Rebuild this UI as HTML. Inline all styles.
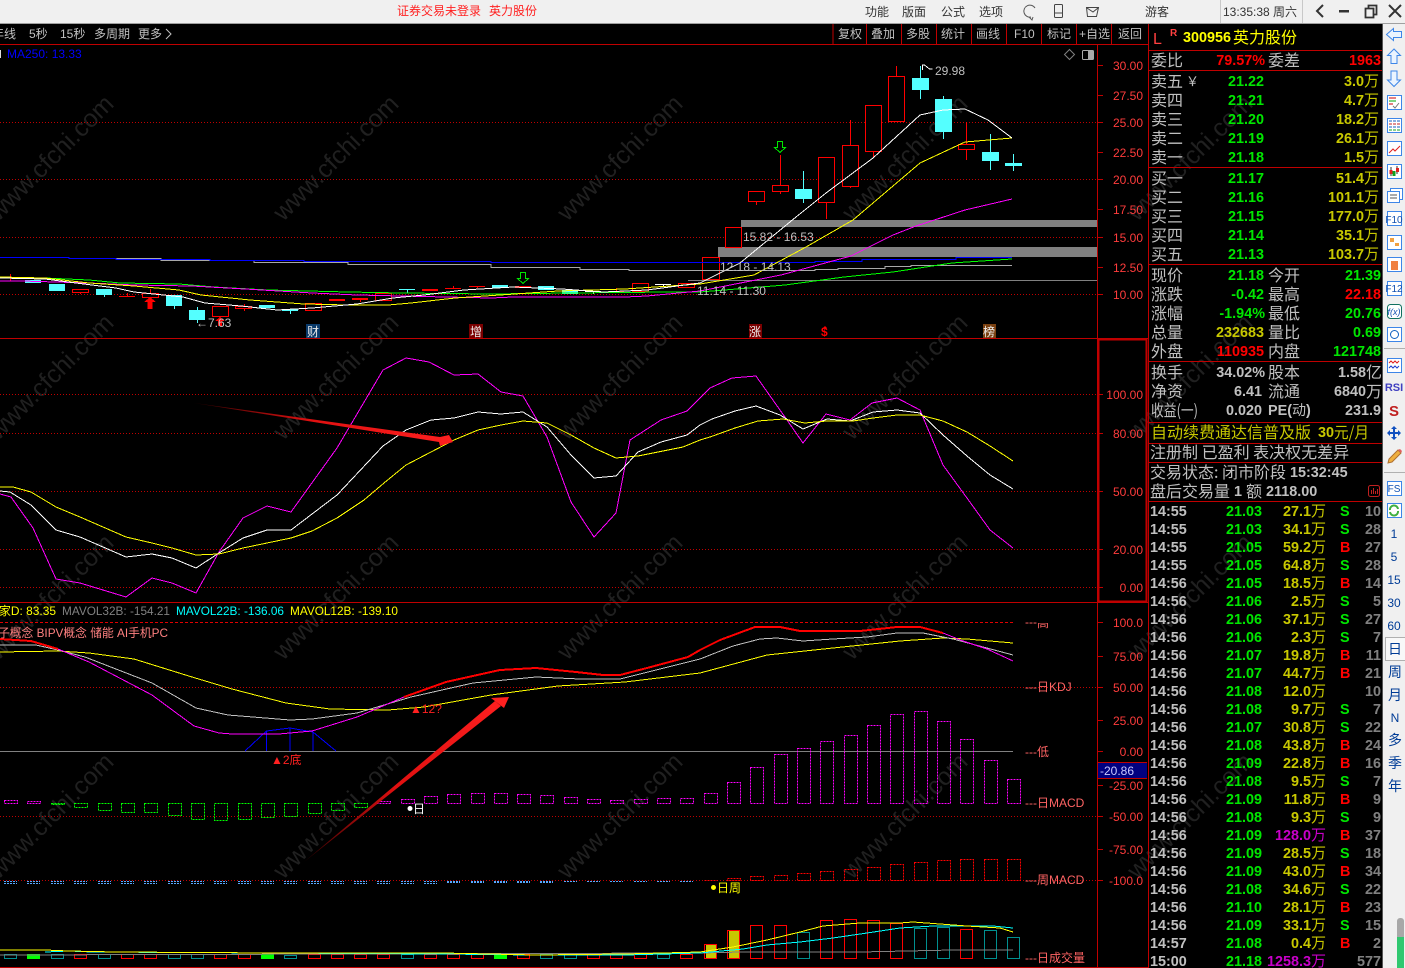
<!DOCTYPE html>
<html lang="zh"><head><meta charset="utf-8"><title>英力股份</title>
<style>
html,body{margin:0;padding:0;background:#000;overflow:hidden;width:1405px;height:968px}
svg{position:absolute;left:0;top:0;display:block}
text{font-family:"Liberation Sans","WenQuanYi Zen Hei","Noto Sans CJK SC",sans-serif;white-space:pre}
.cn{font-size:16px;fill:#c0c0c0;font-family:"WenQuanYi Zen Hei","Noto Sans CJK SC",sans-serif}
.t{font-size:12px;fill:#c0c0c0;font-family:"Liberation Sans","WenQuanYi Zen Hei","Noto Sans CJK SC",sans-serif}
.k{font-size:12px;fill:#222;font-family:"WenQuanYi Zen Hei","Noto Sans CJK SC",sans-serif}
.n{font-size:14.4px;font-weight:bold}
.g{fill:#00e600}.r{fill:#ff0000}.y{fill:#c8c800}.s{fill:#c0c0c0}.d{fill:#808080}.m{fill:#c800c8}
.e{text-anchor:end}
.w{font-size:15px;font-weight:normal;font-family:"WenQuanYi Zen Hei","Noto Sans CJK SC",sans-serif}
.ax{font-size:12px;fill:#ff3c3c;text-anchor:end}
.lb{font-size:12px;fill:#ff6464}
.wm{font-size:25px;fill:#202020;text-anchor:middle}
.si{font-size:12px;fill:#003c96;text-anchor:middle}
.sc{font-size:14px;fill:#003c96;text-anchor:middle;font-family:"WenQuanYi Zen Hei","Noto Sans CJK SC",sans-serif}
.l{fill:none;stroke-width:1;shape-rendering:crispEdges;stroke-linejoin:round}
.b{shape-rendering:crispEdges}
.dot{fill:none;stroke-dasharray:1 2;stroke:#c00000;stroke-width:1;shape-rendering:crispEdges}
.db{fill:none;stroke-dasharray:2 1;stroke-width:1;shape-rendering:crispEdges}
</style></head><body>
<svg width="1405" height="968" viewBox="0 0 1405 968" xmlns="http://www.w3.org/2000/svg">
<defs>
<linearGradient id="a1" gradientUnits="userSpaceOnUse" x1="194" y1="403" x2="453" y2="442"><stop offset="0" stop-color="#300"/><stop offset=".45" stop-color="#e01010"/><stop offset="1" stop-color="#ff2020"/></linearGradient>
<linearGradient id="a2" gradientUnits="userSpaceOnUse" x1="304" y1="862" x2="509" y2="697"><stop offset="0" stop-color="#300"/><stop offset=".45" stop-color="#e01010"/><stop offset="1" stop-color="#ff2020"/></linearGradient>
<clipPath id="gao"><rect x="1025" y="623" width="30" height="6"/></clipPath>
</defs>
<rect width="1405" height="968" fill="#000"/>

<!-- watermark -->
<g>
<text class="wm" x="51" y="166" transform="rotate(-45 51 158)">www.cfchi.com</text><text class="wm" x="336" y="166" transform="rotate(-45 336 158)">www.cfchi.com</text><text class="wm" x="620" y="166" transform="rotate(-45 620 158)">www.cfchi.com</text><text class="wm" x="905" y="166" transform="rotate(-45 905 158)">www.cfchi.com</text><text class="wm" x="1190" y="166" transform="rotate(-45 1190 158)">www.cfchi.com</text>
<text class="wm" x="51" y="385" transform="rotate(-45 51 377)">www.cfchi.com</text><text class="wm" x="336" y="385" transform="rotate(-45 336 377)">www.cfchi.com</text><text class="wm" x="620" y="385" transform="rotate(-45 620 377)">www.cfchi.com</text><text class="wm" x="905" y="385" transform="rotate(-45 905 377)">www.cfchi.com</text><text class="wm" x="1190" y="385" transform="rotate(-45 1190 377)">www.cfchi.com</text>
<text class="wm" x="51" y="605" transform="rotate(-45 51 597)">www.cfchi.com</text><text class="wm" x="336" y="605" transform="rotate(-45 336 597)">www.cfchi.com</text><text class="wm" x="620" y="605" transform="rotate(-45 620 597)">www.cfchi.com</text><text class="wm" x="905" y="605" transform="rotate(-45 905 597)">www.cfchi.com</text><text class="wm" x="1190" y="605" transform="rotate(-45 1190 597)">www.cfchi.com</text>
<text class="wm" x="51" y="824" transform="rotate(-45 51 816)">www.cfchi.com</text><text class="wm" x="336" y="824" transform="rotate(-45 336 816)">www.cfchi.com</text><text class="wm" x="620" y="824" transform="rotate(-45 620 816)">www.cfchi.com</text><text class="wm" x="905" y="824" transform="rotate(-45 905 816)">www.cfchi.com</text><text class="wm" x="1190" y="824" transform="rotate(-45 1190 816)">www.cfchi.com</text>
</g>

<!-- grid -->
<path class="dot" d="M0 122.500H1098M0 179.500H1098M0 237.500H1098M0 294.500H1098M0 394.500H1098M0 433.500H1098M0 491.500H1098M0 549.500H1098M0 587.500H1098M0 687.500H1098M0 816.500H1098M0 880.500H1098"/>
<path d="M0 622.500H1015" fill="none" stroke="#e00000" stroke-dasharray="3 2" class="b"/>
<path d="M0 751.500H1013" fill="none" stroke="#808080" class="b"/>
<!-- zones -->
<rect class="b" x="741" y="220" width="357" height="7" fill="#808080"/>
<rect class="b" x="718" y="247" width="380" height="10" fill="#808080"/>
<path d="M688 280.500H1098" stroke="#808080" fill="none" class="b"/>

<!-- frames -->
<g class="b" fill="none" stroke="#c00000">
<path d="M0 44.500H1148M0 338.500H1148M0 602.500H1148M0 967.500H1148M1097.500 45V967M1148.500 24V968"/>
<path d="M833 24V44M866.500 24V44M901.500 24V44M936.500 24V44M971.500 24V44M1006.500 24V44M1041.500 24V44M1076.500 24V44M1111.500 24V44"/>
<rect x="1098.500" y="339.500" width="48" height="262" stroke-width="2"/>
<path d="M1098 65.500h5M1098 95.500h5M1098 122.500h5M1098 152.500h5M1098 179.500h5M1098 209.500h5M1098 237.500h5M1098 267.500h5M1098 294.500h5M1098 394.500h5M1098 433.500h5M1098 491.500h5M1098 549.500h5M1098 587.500h5M1098 622.500h5M1098 656.500h5M1098 687.500h5M1098 720.500h5M1098 751.500h5M1098 785.500h5M1098 816.500h5M1098 849.500h5M1098 880.500h5"/>
</g>

<!-- candles -->
<g class="b">
<path fill="none" stroke="#54ffff" d="M104.500 295V297M174.500 306V309M197.500 307V323M290.500 311V314M407.500 289V293M803.500 171V203M920.500 66V99M943.500 96V139M990.500 134V170M1013.500 154V171"/>
<path fill="none" stroke="#ff0000" d="M80.500 292V294M127.500 293V296M150.500 289V293M244.500 304V311M360.500 300V302M453.500 286V288M477.500 287V288M616.500 288V292M756.500 201V205M780.500 155V194M826.500 202V219M850.500 120V188M873.500 151V158M896.500 66V76M966.500 122V160M10.500 274V281" />
<path fill="#54ffff" d="M25 280h16v3h-16zM49 284h16v7h-16zM96 289h16v6h-16zM166 295h16v11h-16zM189 310h16v10h-16zM259 305h16v3h-16zM282 309h16v2h-16zM399 289h16v1h-16zM492 285h16v3h-16zM538 286h16v4h-16zM562 290h16v4h-16zM795 189h17v10h-17zM912 78h17v12h-17zM935 99h17v33h-17zM982 152h17v9h-17zM1005 163h17v3h-17z"/>
<path fill="#ff0000" d="M119 296h16v1h-16zM329 299h16v2h-16zM352 298h16v2h-16zM422 289h16v2h-16zM445 288h16v1h-16zM469 286h16v1h-16zM515 286h16v2h-16zM608 291h16v1h-16z"/>
<path fill="#fff" d="M585 291h16v1h-16zM655 284h16v1h-16zM593 291h1v3h-1zM663 284h1v3h-1z"/>
<path fill="#000" stroke="#ff0000" d="M72.500 289.500h16v3h-16zM142.500 293.500h16v4h-16zM212.500 306.500h16v10h-16zM235.500 306.500h16v2h-16zM305.500 303.500h16v7h-16zM375.500 293.500h16v7h-16zM632.500 283.500h16v8h-16zM678.500 283.500h16v4h-16zM702.500 257.500h17v22h-17zM725.500 227.500h16v20h-16zM748.500 191.500h16v10h-16zM772.500 185.500h16v6h-16zM818.500 157.500h16v45h-16zM842.500 145.500h16v41h-16zM865.500 105.500h16v46h-16zM888.500 76.500h16v45h-16zM958.500 144.500h16v5h-16z"/>
</g>
<polygon points="150,297 156,302 152.500,302 152.500,309 147.500,309 147.500,302 144,302" fill="#ff0000" class="b"/>
<path d="M777.500 141.500h5v6h3l-5.500 5-5.500-5h3zM520.500 272.500h5v6h3l-5.500 5-5.500-5h3z" fill="none" stroke="#00e600" class="b"/>

<!-- main lines -->
<path class="l" stroke="#a8a8a8" d="M92 258.500H161V260.500H254V262.500H348V264.500H491V267.500H580V269.500H629V270.500H815V269.500H838V268.500H885V266.500H911V265.500H1012"/>
<path class="l" stroke="#0000ff" d="M0 257.500H69V258.500H116V259.500H210V260.500H304V261.500H491V262.500H815V261.500H862V259.500H956V257.500H1012"/>
<polyline class="l" stroke="#00ff00" points="0,277 45,278 89,280 120,283 179,284 214,287 268,290 348,292 402,293 491,294 571,293 670,292 700,292 785,285 844,277 893,272 952,263 1012,259"/>
<polyline class="l" stroke="#ff00ff" points="0,281 22,281 89,283 134,285 192,286 245,289 312,293 357,295 446,297 491,298 513,297 625,297 647,296 700,291 781,275 851,256 893,235 916,226 965,210 1012,199"/>
<polyline class="l" stroke="#ffff00" points="0,277 45,278 89,283 134,286 179,290 201,295 250,300 304,304 348,305 388,305 411,303 455,298 500,295 558,291 625,289 700,284 754,275 806,247 853,220 873,203 920,163 965,142 1012,138"/>
<polyline class="l" stroke="#ffffff" points="0,278 45,279 76,283 116,288 134,292 183,297 205,303 241,306 277,310 312,308 357,304 393,298 424,295 464,290 513,287 562,289 603,292 647,290 700,283 740,263 796,217 826,193 873,158 920,115 943,110 965,109 988,120 1012,138"/>
<polygon points="220,317 225,321 222,321 222,326 218,326 218,321 215,321" fill="#ff0000" class="b"/>

<!-- main annot -->
<text class="t" x="196" y="327">←7.63</text>
<path d="M922.500 70v-5h2l5 4h3" fill="none" stroke="#fff" class="b"/>
<text class="t" x="935" y="75">29.98</text>
<text class="t" x="743" y="241">15.82 - 16.53</text>
<text class="t" x="720" y="271">12.18 - 14.13</text>
<text class="t" x="697" y="295">11.14 - 11.30</text>
<rect x="0" y="50" width="1" height="8" fill="#ddd"/>
<text x="7" y="58" font-size="12" fill="#0000ff">MA250: 13.33</text>
<path d="M1069.500 49.500l5 5-5 5-5-5z" fill="none" stroke="#808080"/>
<rect x="1082.500" y="50.500" width="11" height="9" rx="1" fill="none" stroke="#aaa"/><rect x="1088" y="51" width="5" height="8" fill="#aaa"/>

<!-- event badges -->
<rect x="306" y="324" width="14" height="14" fill="#0a3a6a"/><text class="k" x="307" y="336" style="fill:#e8e8e8">财</text>
<rect x="469" y="324" width="14" height="14" fill="#7a0000"/><text class="k" x="470" y="336" style="fill:#eee">增</text>
<rect x="749" y="324" width="13" height="14" fill="#7a0000"/><text class="k" x="749" y="336" style="fill:#eee">涨</text>
<text x="821" y="336" font-size="12" font-weight="bold" fill="#ff0000">$</text><path d="M825 326l2 2h-4z" fill="#f00"/>
<rect x="983" y="324" width="13" height="14" fill="#7a4010"/><text class="k" x="983" y="336" style="fill:#eee">榜</text>

<!-- KDJ -->
<polyline class="l" stroke="#ff00ff" points="0,494 11,497 33,528 56,579 80,583 126,597 152,578 172,583 196,593 219,552 243,518 267,506 291,512 337,448 383,370 406,358 429,362 454,375 478,374 501,392 523,396 547,437 571,502 594,537 616,513 630,440 661,420 687,411 700,398 710,388 732,378 756,376 787,420 803,443 826,414 850,420 872,403 897,398 920,410 943,465 967,498 990,530 1013,548"/>
<polyline class="l" stroke="#ffffff" points="0,491 10,492 31,505 56,530 80,537 126,557 152,554 172,558 196,568 219,553 243,538 267,530 291,530 337,495 383,446 406,430 431,420 454,418 478,412 501,414 523,412 547,427 571,455 594,478 616,476 638,452 661,442 687,435 700,425 712,419 735,411 756,406 780,415 803,429 827,419 850,421 873,412 897,410 920,413 943,435 967,456 990,475 1013,489"/>
<polyline class="l" stroke="#ffff00" points="0,487 13,487 31,492 56,507 80,517 126,537 152,543 172,548 196,555 219,554 243,548 267,543 291,538 312,531 337,518 364,500 384,483 406,465 431,452 454,440 478,430 501,425 523,421 547,423 571,435 594,448 616,458 638,456 683,447 700,440 710,437 735,428 758,421 783,419 805,423 827,421 853,421 873,418 897,415 920,415 943,421 967,432 990,446 1013,461"/>
<polygon points="194,403 440,437 449,435 453,442 440,446 439,442" fill="url(#a1)"/>

<!-- lower panel: MACD etc -->
<path class="db" stroke="#ff00ff" d="M4.500 800.500h13v3h-13zM27.500 801.500h13v2h-13zM377.500 801.500h13v2h-13zM401.500 799.500h13v4h-13zM424.500 796.500h13v7h-13zM447.500 794.500h13v9h-13zM471.500 793.500h13v10h-13zM494.500 793.500h13v10h-13zM517.500 794.500h13v9h-13zM540.500 795.500h13v8h-13zM564.500 797.500h13v6h-13zM587.500 799.500h13v4h-13zM610.500 800.500h13v3h-13zM634.500 799.500h13v4h-13zM657.500 798.500h13v5h-13zM680.500 798.500h13v5h-13zM704.500 793.500h13v10h-13zM727.500 782.500h13v21h-13zM750.500 767.500h13v36h-13zM774.500 754.500h13v49h-13zM797.500 748.500h13v55h-13zM820.500 741.500h13v62h-13zM844.500 735.500h13v68h-13zM867.500 725.500h13v78h-13zM890.500 714.500h13v89h-13zM914.500 711.500h13v92h-13zM937.500 721.500h13v82h-13zM960.500 739.500h13v64h-13zM984.500 760.500h13v43h-13zM1007.500 779.500h13v24h-13z"/>
<path class="db" stroke="#00ff00" d="M51.500 803.500h13v1h-13zM74.500 803.500h13v4h-13zM98.500 803.500h13v7h-13zM121.500 803.500h13v9h-13zM144.500 803.500h13v9h-13zM168.500 803.500h13v12h-13zM191.500 803.500h13v16h-13zM214.500 803.500h13v17h-13zM238.500 803.500h13v16h-13zM261.500 803.500h13v14h-13zM284.500 803.500h13v13h-13zM308.500 803.500h13v10h-13zM331.500 803.500h13v7h-13zM354.500 803.500h13v4h-13z"/>
<path class="db" stroke="#ff0000" d="M704.500 880.500h13M727.500 878.500h13v2h-13zM750.500 876.500h13v4h-13zM774.500 875.500h13v5h-13zM797.500 873.500h13v7h-13zM820.500 871.500h13v9h-13zM844.500 869.500h13v11h-13zM867.500 867.500h13v13h-13zM890.500 864.500h13v16h-13zM914.500 862.500h13v18h-13zM937.500 860.500h13v20h-13zM960.500 859.500h13v21h-13zM984.500 859.500h13v21h-13zM1007.500 859.500h13v21h-13z"/>
<path class="db" stroke="#58a8ff" d="M4 881.500h13M4 883.500h13M27 881.500h13M27 883.500h13M51 881.500h13M51 883.500h13M74 881.500h13M74 883.500h13M98 881.500h13M98 883.500h13M121 881.500h13M121 883.500h13M144 881.500h13M144 883.500h13M168 881.500h13M168 883.500h13M191 881.500h13M191 883.500h13M214 881.500h13M214 883.500h13M238 881.500h13M238 883.500h13M261 881.500h13M261 883.500h13M284 881.500h13M284 883.500h13M308 881.500h13M308 883.500h13M331 881.500h13M331 883.500h13M354 881.500h13M354 883.500h13M377 881.500h13M377 883.500h13M401 881.500h13M401 883.500h13M424 881.500h13M424 883.500h13M447 881.500h13M447 882.500h13M471 881.500h13M471 882.500h13M494 881.500h13M494 882.500h13M517 881.500h13M517 882.500h13M540 881.500h13M540 882.500h13M564 881.500h13M587 881.500h13M610 881.500h13M634 881.500h13M657 881.500h13M680 881.500h13"/>

<!-- volume -->
<g class="b">
<path fill="#c8c800" d="M706 945h10v14h-10zM729 931h10v28h-10z"/>
<path fill="#00ff00" d="M27 954h13v5h-13zM261 954h13v5h-13zM494 954h13v5h-13z"/>
<path fill="none" stroke="#ff0000" d="M74.500 954.500h12v4h-12zM121.500 954.500h12v4h-12zM144.500 954.500h12v4h-12zM214.500 954.500h12v4h-12zM238.500 954.500h12v4h-12zM308.500 954.500h12v4h-12zM331.500 954.500h12v4h-12zM354.500 954.500h12v4h-12zM377.500 954.500h12v4h-12zM424.500 954.500h12v4h-12zM447.500 954.500h12v4h-12zM471.500 954.500h12v4h-12zM517.500 954.500h12v4h-12zM587.500 954.500h12v4h-12zM610.500 954.500h12v4h-12zM634.500 954.500h12v4h-12zM680.500 954.500h12v4h-12zM704.500 944.500h12v14h-12zM727.500 930.500h12v28h-12zM750.500 925.500h12v33h-12zM774.500 925.500h12v33h-12zM820.500 920.500h12v38h-12zM844.500 919.500h12v39h-12zM867.500 920.500h12v38h-12zM890.500 923.500h12v35h-12zM960.500 929.500h12v29h-12z"/>
<path fill="none" stroke="#009090" d="M4.500 954.500h12v4h-12zM51.500 954.500h12v4h-12zM98.500 954.500h12v4h-12zM168.500 954.500h12v4h-12zM191.500 954.500h12v4h-12zM284.500 955.500h12v3h-12zM401.500 954.500h12v4h-12zM540.500 954.500h12v4h-12zM564.500 954.500h12v4h-12zM657.500 954.500h12v4h-12zM797.500 932.500h12v26h-12zM914.500 928.500h12v30h-12zM937.500 927.500h12v31h-12zM984.500 930.500h12v28h-12zM1007.500 937.500h12v21h-12z"/>
</g>
<polyline class="l" stroke="#808080" points="0,955 700,953 743,952 860,952 953,950 1013,950"/>
<polyline class="l" stroke="#00ffff" points="45,952 69,951 92,952 277,953 442,954 536,955 625,955 700,953 743,949 767,945 800,942 833,938 867,933 900,928 933,926 967,926 993,926 1013,928"/>
<polyline class="l" stroke="#ffff00" points="0,950 45,950 69,951 116,952 277,953 442,953 536,955 625,954 700,952 733,947 767,940 800,932 823,926 860,923 900,923 913,922 940,924 967,926 1000,928 1013,932"/>

<!-- KDJ day -->
<path d="M245 751L266.500 731L290 728L313 732L336 751M266.500 731V751M290 728V751M313 732V751" fill="none" stroke="#0000ff" class="b"/>
<polyline class="l" stroke="#ffff00" points="0,652 58,651 89,653 134,659 192,677 232,689 286,703 330,709 388,710 424,707 491,695 558,686 625,682 700,673 767,655 833,648 900,641 943,638 967,639 1013,643"/>
<polyline class="l" stroke="#c0c0c0" points="0,645 36,645 58,650 85,657 152,683 196,708 228,715 290,720 312,719 357,713 411,697 473,683 536,677 580,679 620,679 700,659 733,646 760,639 777,638 803,641 833,639 867,637 897,633 923,633 953,639 1013,655"/>
<polyline class="l" stroke="#ff00ff" points="58,649 89,662 152,695 194,726 219,733 232,734 279,734 312,731 357,717 404,697"/>
<polyline class="l" stroke="#ff00ff" points="943,633 963,641 987,649 1013,661"/>
<polyline fill="none" stroke="#ff0000" stroke-width="2" class="b" points="0,639 31,641 58,649"/>
<polyline fill="none" stroke="#ff0000" stroke-width="2" class="b" points="404,697 446,682 500,670 536,668 576,672 603,675 620,675 647,668 688,657 700,650 720,640 755,627 780,627 800,631 860,631 897,627 920,627 943,633"/>

<polygon points="304,862 495,701 501,706" fill="url(#a2)"/>
<path d="M509 697L491 698L504 708Z" fill="#ff2020"/>

<text x="410" y="713" font-size="12" fill="#ff2020">▲12?</text>
<text x="271" y="764" font-size="12" fill="#ff2020">▲2底</text>
<circle cx="410" cy="808.500" r="2.500" fill="#fff"/><text class="t" x="413" y="813" style="fill:#fff">日</text>
<circle cx="713.500" cy="887.500" r="2.500" fill="#ffff00"/><text class="t" x="717" y="892" style="fill:#ffff00">日周</text>

<!-- legend -->
<text x="-1" y="615" font-size="12" fill="#ffff00" textLength="57" lengthAdjust="spacingAndGlyphs">家D: 83.35</text>
<text x="62" y="615" font-size="12" fill="#808080" textLength="108" lengthAdjust="spacingAndGlyphs">MAVOL32B: -154.21</text>
<text x="176" y="615" font-size="12" fill="#00ffff" textLength="108" lengthAdjust="spacingAndGlyphs">MAVOL22B: -136.06</text>
<text x="290" y="615" font-size="12" fill="#ffff00" textLength="108" lengthAdjust="spacingAndGlyphs">MAVOL12B: -139.10</text>
<text x="-2" y="637" font-size="12" fill="#ff8080" textLength="170" lengthAdjust="spacingAndGlyphs">子概念 BIPV概念 储能 AI手机PC</text>

<!-- axis -->
<text class="ax" x="1143" y="70">30.00</text><text class="ax" x="1143" y="100">27.50</text><text class="ax" x="1143" y="127">25.00</text><text class="ax" x="1143" y="157">22.50</text><text class="ax" x="1143" y="184">20.00</text><text class="ax" x="1143" y="214">17.50</text><text class="ax" x="1143" y="242">15.00</text><text class="ax" x="1143" y="272">12.50</text><text class="ax" x="1143" y="299">10.00</text>
<text class="ax" x="1143" y="399">100.00</text><text class="ax" x="1143" y="438">80.00</text><text class="ax" x="1143" y="496">50.00</text><text class="ax" x="1143" y="554">20.00</text><text class="ax" x="1143" y="592">0.00</text>
<text class="ax" x="1143" y="627">100.0</text><text class="ax" x="1143" y="661">75.00</text><text class="ax" x="1143" y="692">50.00</text><text class="ax" x="1143" y="725">25.00</text><text class="ax" x="1143" y="756">0.00</text><text class="ax" x="1143" y="790">-25.00</text><text class="ax" x="1143" y="821">-50.00</text><text class="ax" x="1143" y="854">-75.00</text><text class="ax" x="1143" y="885">-100.0</text>
<rect x="1098" y="763" width="49" height="15" fill="#000080" class="b"/><path d="M1098 762.500h49M1098 778.500h49" stroke="#c00000" class="b"/>
<text x="1100" y="775" font-size="12" fill="#c8c8ff">-20.86</text>

<!-- line labels -->
<text class="lb" x="1025" y="626">---</text>
<g clip-path="url(#gao)"><text class="lb" x="1037" y="627">高</text></g>
<text class="lb" x="1025" y="691">---日KDJ</text>
<text class="lb" x="1025" y="756">---低</text>
<text class="lb" x="1025" y="807">---日MACD</text>
<text class="lb" x="1025" y="884">---周MACD</text>
<text class="lb" x="1025" y="962">---日成交量</text>

<!-- toolbar -->
<text class="t" x="-8" y="38">年线</text>
<text class="t" x="29" y="38">5秒</text>
<text class="t" x="60" y="38">15秒</text>
<text class="t" x="94" y="38">多周期</text>
<text class="t" x="138" y="38">更多</text>
<path d="M166 29l5 5-5 5" fill="none" stroke="#c0c0c0"/>
<text class="t" x="838" y="38">复权</text><text class="t" x="871" y="38">叠加</text><text class="t" x="906" y="38">多股</text><text class="t" x="941" y="38">统计</text><text class="t" x="976" y="38">画线</text><text class="t" x="1014" y="38">F10</text><text class="t" x="1047" y="38">标记</text><text class="t" x="1079" y="38">+自选</text><text class="t" x="1118" y="38">返回</text>

<!-- right panel separators -->
<g class="b" fill="none" stroke="#c00000">
<path d="M1149 50.500H1382M1149 70.500H1382M1149 167.500H1382M1149 264.500H1382M1149 361.500H1382M1149 422.500H1382M1149 443.500H1382M1149 462.500H1382M1149 501.500H1382"/>
</g>

<!-- header -->
<text x="1153" y="44" font-size="16" fill="#ff4040">L</text>
<text x="1170" y="36" font-size="10" font-weight="bold" fill="#ff4040">R</text>
<text x="1183" y="42" font-size="14.4" font-weight="bold" fill="#ffff00">300956</text>
<text x="1233" y="43" font-size="16" fill="#ffff00" style="font-family:'WenQuanYi Zen Hei','Noto Sans CJK SC',sans-serif">英力股份</text>

<text class="cn" x="1151" y="66">委比</text>
<text class="n r e" x="1265" y="65">79.57%</text>
<text class="cn" x="1268" y="66">委差</text>
<text class="n r e" x="1381" y="65">1963</text>

<text class="cn" x="1151" y="87">卖五</text><text x="1186" y="86" font-size="13" fill="#c0c0c0">￥</text><text class="n g" x="1228" y="86">21.22</text><text class="n y e" x="1379" y="86">3.0<tspan class="w">万</tspan></text>
<text class="cn" x="1151" y="106">卖四</text><text class="n g" x="1228" y="105">21.21</text><text class="n y e" x="1379" y="105">4.7<tspan class="w">万</tspan></text>
<text class="cn" x="1151" y="125">卖三</text><text class="n g" x="1228" y="124">21.20</text><text class="n y e" x="1379" y="124">18.2<tspan class="w">万</tspan></text>
<text class="cn" x="1151" y="144">卖二</text><text class="n g" x="1228" y="143">21.19</text><text class="n y e" x="1379" y="143">26.1<tspan class="w">万</tspan></text>
<text class="cn" x="1151" y="163">卖一</text><text class="n g" x="1228" y="162">21.18</text><text class="n y e" x="1379" y="162">1.5<tspan class="w">万</tspan></text>

<text class="cn" x="1151" y="184">买一</text><text class="n g" x="1228" y="183">21.17</text><text class="n y e" x="1379" y="183">51.4<tspan class="w">万</tspan></text>
<text class="cn" x="1151" y="203">买二</text><text class="n g" x="1228" y="202">21.16</text><text class="n y e" x="1379" y="202">101.1<tspan class="w">万</tspan></text>
<text class="cn" x="1151" y="222">买三</text><text class="n g" x="1228" y="221">21.15</text><text class="n y e" x="1379" y="221">177.0<tspan class="w">万</tspan></text>
<text class="cn" x="1151" y="241">买四</text><text class="n g" x="1228" y="240">21.14</text><text class="n y e" x="1379" y="240">35.1<tspan class="w">万</tspan></text>
<text class="cn" x="1151" y="260">买五</text><text class="n g" x="1228" y="259">21.13</text><text class="n y e" x="1379" y="259">103.7<tspan class="w">万</tspan></text>

<text class="cn" x="1151" y="281">现价</text><text class="n g e" x="1264" y="280">21.18</text><text class="cn" x="1268" y="281">今开</text><text class="n g e" x="1381" y="280">21.39</text>
<text class="cn" x="1151" y="300">涨跌</text><text class="n g e" x="1264" y="299">-0.42</text><text class="cn" x="1268" y="300">最高</text><text class="n r e" x="1381" y="299">22.18</text>
<text class="cn" x="1151" y="319">涨幅</text><text class="n g e" x="1265" y="318">-1.94%</text><text class="cn" x="1268" y="319">最低</text><text class="n g e" x="1381" y="318">20.76</text>
<text class="cn" x="1151" y="338">总量</text><text class="n y e" x="1264" y="337">232683</text><text class="cn" x="1268" y="338">量比</text><text class="n g e" x="1381" y="337">0.69</text>
<text class="cn" x="1151" y="357">外盘</text><text class="n r e" x="1264" y="356">110935</text><text class="cn" x="1268" y="357">内盘</text><text class="n g e" x="1381" y="356">121748</text>

<text class="cn" x="1151" y="378">换手</text><text class="n s e" x="1265" y="377">34.02%</text><text class="cn" x="1268" y="378">股本</text><text class="n s e" x="1366" y="377">1.58</text><text class="cn" x="1366" y="378">亿</text>
<text class="cn" x="1151" y="397">净资</text><text class="n s e" x="1262" y="396">6.41</text><text class="cn" x="1268" y="397">流通</text><text class="n s e" x="1366" y="396">6840</text><text class="cn" x="1366" y="397">万</text>
<text class="cn" x="1151" y="416" textLength="47" lengthAdjust="spacingAndGlyphs">收益(一)</text><text class="n s e" x="1262" y="415">0.020</text><text class="n s" x="1268" y="415">PE(<tspan class="w" style="font-size:14px">动</tspan>)</text><text class="n s e" x="1381" y="415">231.9</text>

<text class="cn" x="1151" y="438" style="fill:#c8c800">自动续费通达信普及版</text><text x="1318" y="437" class="n y">30</text><text class="cn" x="1334" y="438" style="fill:#c8c800" textLength="35" lengthAdjust="spacingAndGlyphs">元/月</text>
<text class="cn" x="1150" y="458">注册制 已盈利 表决权无差异</text>
<text class="cn" x="1150" y="478">交易状态: 闭市阶段</text><text class="n s" x="1290" y="477">15:32:45</text>
<text class="cn" x="1150" y="497">盘后交易量</text><text class="n s" x="1234" y="496">1</text><text class="cn" x="1246" y="497">额</text><text class="n s" x="1266" y="496">2118.00</text>
<rect x="1368.500" y="485.500" width="11" height="11" rx="2" fill="none" stroke="#c02020"/><path d="M1371.500 494v-4M1373.500 494v-6M1375.500 494v-3M1377.500 494v-5" stroke="#c02020" class="b"/>

<!-- trades -->
<g>
<text class="n s" x="1150" y="516">14:55</text><text class="n g" x="1226" y="516">21.03</text><text class="n y e" x="1326" y="516">27.1<tspan class="w">万</tspan></text><text class="n g" x="1340" y="516">S</text><text class="n d e" x="1381" y="516">10</text>
<text class="n s" x="1150" y="534">14:55</text><text class="n g" x="1226" y="534">21.03</text><text class="n y e" x="1326" y="534">34.1<tspan class="w">万</tspan></text><text class="n g" x="1340" y="534">S</text><text class="n d e" x="1381" y="534">28</text>
<text class="n s" x="1150" y="552">14:55</text><text class="n g" x="1226" y="552">21.05</text><text class="n y e" x="1326" y="552">59.2<tspan class="w">万</tspan></text><text class="n r" x="1340" y="552">B</text><text class="n d e" x="1381" y="552">27</text>
<text class="n s" x="1150" y="570">14:55</text><text class="n g" x="1226" y="570">21.05</text><text class="n y e" x="1326" y="570">64.8<tspan class="w">万</tspan></text><text class="n g" x="1340" y="570">S</text><text class="n d e" x="1381" y="570">28</text>
<text class="n s" x="1150" y="588">14:56</text><text class="n g" x="1226" y="588">21.05</text><text class="n y e" x="1326" y="588">18.5<tspan class="w">万</tspan></text><text class="n r" x="1340" y="588">B</text><text class="n d e" x="1381" y="588">14</text>
<text class="n s" x="1150" y="606">14:56</text><text class="n g" x="1226" y="606">21.06</text><text class="n y e" x="1326" y="606">2.5<tspan class="w">万</tspan></text><text class="n g" x="1340" y="606">S</text><text class="n d e" x="1381" y="606">5</text>
<text class="n s" x="1150" y="624">14:56</text><text class="n g" x="1226" y="624">21.06</text><text class="n y e" x="1326" y="624">37.1<tspan class="w">万</tspan></text><text class="n g" x="1340" y="624">S</text><text class="n d e" x="1381" y="624">27</text>
<text class="n s" x="1150" y="642">14:56</text><text class="n g" x="1226" y="642">21.06</text><text class="n y e" x="1326" y="642">2.3<tspan class="w">万</tspan></text><text class="n g" x="1340" y="642">S</text><text class="n d e" x="1381" y="642">7</text>
<text class="n s" x="1150" y="660">14:56</text><text class="n g" x="1226" y="660">21.07</text><text class="n y e" x="1326" y="660">19.8<tspan class="w">万</tspan></text><text class="n r" x="1340" y="660">B</text><text class="n d e" x="1381" y="660">11</text>
<text class="n s" x="1150" y="678">14:56</text><text class="n g" x="1226" y="678">21.07</text><text class="n y e" x="1326" y="678">44.7<tspan class="w">万</tspan></text><text class="n r" x="1340" y="678">B</text><text class="n d e" x="1381" y="678">21</text>
<text class="n s" x="1150" y="696">14:56</text><text class="n g" x="1226" y="696">21.08</text><text class="n y e" x="1326" y="696">12.0<tspan class="w">万</tspan></text><text class="n d e" x="1381" y="696">10</text>
<text class="n s" x="1150" y="714">14:56</text><text class="n g" x="1226" y="714">21.08</text><text class="n y e" x="1326" y="714">9.7<tspan class="w">万</tspan></text><text class="n g" x="1340" y="714">S</text><text class="n d e" x="1381" y="714">7</text>
<text class="n s" x="1150" y="732">14:56</text><text class="n g" x="1226" y="732">21.07</text><text class="n y e" x="1326" y="732">30.8<tspan class="w">万</tspan></text><text class="n g" x="1340" y="732">S</text><text class="n d e" x="1381" y="732">22</text>
<text class="n s" x="1150" y="750">14:56</text><text class="n g" x="1226" y="750">21.08</text><text class="n y e" x="1326" y="750">43.8<tspan class="w">万</tspan></text><text class="n r" x="1340" y="750">B</text><text class="n d e" x="1381" y="750">24</text>
<text class="n s" x="1150" y="768">14:56</text><text class="n g" x="1226" y="768">21.09</text><text class="n y e" x="1326" y="768">22.8<tspan class="w">万</tspan></text><text class="n r" x="1340" y="768">B</text><text class="n d e" x="1381" y="768">16</text>
<text class="n s" x="1150" y="786">14:56</text><text class="n g" x="1226" y="786">21.08</text><text class="n y e" x="1326" y="786">9.5<tspan class="w">万</tspan></text><text class="n g" x="1340" y="786">S</text><text class="n d e" x="1381" y="786">7</text>
<text class="n s" x="1150" y="804">14:56</text><text class="n g" x="1226" y="804">21.09</text><text class="n y e" x="1326" y="804">11.8<tspan class="w">万</tspan></text><text class="n r" x="1340" y="804">B</text><text class="n d e" x="1381" y="804">9</text>
<text class="n s" x="1150" y="822">14:56</text><text class="n g" x="1226" y="822">21.08</text><text class="n y e" x="1326" y="822">9.3<tspan class="w">万</tspan></text><text class="n g" x="1340" y="822">S</text><text class="n d e" x="1381" y="822">9</text>
<text class="n s" x="1150" y="840">14:56</text><text class="n g" x="1226" y="840">21.09</text><text class="n m e" x="1326" y="840">128.0<tspan class="w">万</tspan></text><text class="n r" x="1340" y="840">B</text><text class="n d e" x="1381" y="840">37</text>
<text class="n s" x="1150" y="858">14:56</text><text class="n g" x="1226" y="858">21.09</text><text class="n y e" x="1326" y="858">28.5<tspan class="w">万</tspan></text><text class="n g" x="1340" y="858">S</text><text class="n d e" x="1381" y="858">18</text>
<text class="n s" x="1150" y="876">14:56</text><text class="n g" x="1226" y="876">21.09</text><text class="n y e" x="1326" y="876">43.0<tspan class="w">万</tspan></text><text class="n r" x="1340" y="876">B</text><text class="n d e" x="1381" y="876">34</text>
<text class="n s" x="1150" y="894">14:56</text><text class="n g" x="1226" y="894">21.08</text><text class="n y e" x="1326" y="894">34.6<tspan class="w">万</tspan></text><text class="n g" x="1340" y="894">S</text><text class="n d e" x="1381" y="894">22</text>
<text class="n s" x="1150" y="912">14:56</text><text class="n g" x="1226" y="912">21.10</text><text class="n y e" x="1326" y="912">28.1<tspan class="w">万</tspan></text><text class="n r" x="1340" y="912">B</text><text class="n d e" x="1381" y="912">23</text>
<text class="n s" x="1150" y="930">14:56</text><text class="n g" x="1226" y="930">21.09</text><text class="n y e" x="1326" y="930">33.1<tspan class="w">万</tspan></text><text class="n g" x="1340" y="930">S</text><text class="n d e" x="1381" y="930">15</text>
<text class="n s" x="1150" y="948">14:57</text><text class="n g" x="1226" y="948">21.08</text><text class="n y e" x="1326" y="948">0.4<tspan class="w">万</tspan></text><text class="n r" x="1340" y="948">B</text><text class="n d e" x="1381" y="948">2</text>
<text class="n s" x="1150" y="966">15:00</text><text class="n g" x="1226" y="966">21.18</text><text class="n m e" x="1326" y="966">1258.3<tspan class="w">万</tspan></text><text class="n d e" x="1381" y="966">577</text>
</g>

<!-- top bar -->
<rect x="0" y="0" width="1405" height="23" fill="#f0f0f0"/>
<rect x="0" y="23" width="1405" height="1" fill="#a0a0a0"/>
<text x="397" y="15" font-size="12" fill="#ff2020">证券交易未登录</text>
<text x="489" y="15" font-size="12" fill="#ff2020">英力股份</text>
<text x="865" y="16" font-size="12" fill="#333">功能</text>
<text x="902" y="16" font-size="12" fill="#333">版面</text>
<text x="941" y="16" font-size="12" fill="#333">公式</text>
<text x="979" y="16" font-size="12" fill="#333">选项</text>
<path d="M1035 8a6 6 0 1 0-4 9M1029 17l3 3 1-3" fill="none" stroke="#555"/>
<rect x="1054.500" y="4.500" width="8" height="13" rx="1" fill="none" stroke="#444"/><path d="M1055 13h7" stroke="#444"/>
<path d="M1086.500 7.500h12l-2 9h-9zM1087 8l6 4 5-4" fill="none" stroke="#444"/>
<text x="1145" y="16" font-size="12" fill="#333">游客</text>
<path d="M1220.500 0V23M1302.500 0V23" stroke="#c8c8c8" class="b"/>
<text x="1223" y="16" font-size="12" fill="#333">13:35:38 周六</text>
<path d="M1323 5l-6 6 6 6" fill="none" stroke="#333" stroke-width="2"/>
<path d="M1339 10h10v2.500h-10z" fill="#333"/>
<path d="M1365.500 8.500h8v9h-8zM1368.500 8.500v-3h8v9h-3" fill="none" stroke="#333" stroke-width="1.800"/>
<path d="M1389 5l12 12M1401 5l-12 12" stroke="#333" stroke-width="2"/>

<!-- sidebar -->
<rect x="1383" y="24" width="22" height="944" fill="#f0f0f0"/>
<rect x="1382" y="24" width="1" height="944" fill="#555"/>
<g fill="#eaf4ff" stroke="#3d86e8">
<path d="M1386.500 34.500l7-6v3h8v6h-8v3z"/>
<path d="M1394 49l-6.500 6.500h3.500v8h6v-8h3.500z"/>
<path d="M1391 71h6v9h3.500l-6.500 6.500-6.500-6.500h3.500z"/>
</g>
<g fill="#fff" stroke="#3d86e8" class="b">
<rect x="1387.500" y="95.500" width="14" height="14"/><rect x="1387.500" y="118.500" width="14" height="14"/><rect x="1387.500" y="141.500" width="14" height="14"/><rect x="1387.500" y="164.500" width="14" height="14"/>
<rect x="1390.500" y="188.500" width="12" height="11"/><rect x="1387.500" y="191.500" width="12" height="11"/>
<rect x="1387.500" y="211.500" width="14" height="14"/><rect x="1387.500" y="235.500" width="14" height="14"/><rect x="1387.500" y="257.500" width="14" height="14"/><rect x="1387.500" y="281.500" width="14" height="14"/><rect x="1387.500" y="327.500" width="14" height="14"/><rect x="1387.500" y="358.500" width="14" height="14"/><rect x="1387.500" y="481.500" width="14" height="14"/><rect x="1387.500" y="503.500" width="14" height="14"/>
</g>
<rect x="1387.500" y="304.500" width="14" height="14" rx="3" fill="#fff" stroke="#107060"/>
<path d="M1389 98h7" stroke="#c00" class="b"/><path d="M1389 101h7" stroke="#0a0" class="b"/><path d="M1389 104h4" stroke="#c00" class="b"/><path d="M1393 106l2 2 4-5" stroke="#777" fill="none"/>
<path d="M1389 121h11M1389 127h11" stroke="#1060c0" stroke-dasharray="3 1" class="b"/><path d="M1389 124h11" stroke="#c02020" stroke-dasharray="3 1" class="b"/><path d="M1389 130h11" stroke="#10a020" stroke-dasharray="3 1" class="b"/>
<path d="M1389 153l4-4 2 2 5-5" fill="none" stroke="#e02020"/>
<path d="M1391 167v9M1397 166v8" stroke="#333"/><path d="M1389.500 170h3v4h-3z" fill="#e02020"/><path d="M1392.500 171h3v5h-3z" fill="#10a020"/><path d="M1396 168h3v4h-3z" fill="#e02020"/>
<path d="M1390 195h7M1390 198h7" stroke="#555" class="b"/>
<text x="1394" y="223" text-anchor="middle" font-size="10" fill="#1050b0">F10</text>
<path d="M1390 238h4v4h-4zM1395 243h4v3h-4z" fill="#f0a040"/>
<path d="M1391 261h7v9h-7z" fill="#f08040"/>
<text x="1394" y="292" text-anchor="middle" font-size="10" fill="#1050b0">F12</text>
<text x="1394" y="315" text-anchor="middle" font-size="9" font-style="italic" fill="#1050b0">f(x)</text>
<circle cx="1394.500" cy="334.500" r="4" fill="none" stroke="#1060c0"/>
<path d="M1384 348.500h21M1384 472.500h21" stroke="#b0b0b0" class="b"/>
<path d="M1389 363l2-2 2 2 2-2 2 2 2-2" fill="none" stroke="#e02020"/><path d="M1389 368l2-2 2 2 2-2 2 2 2-2" fill="none" stroke="#2040d0"/>
<text x="1394" y="391" text-anchor="middle" font-size="11" font-weight="bold" fill="#4040c0">RSI</text>
<text x="1394" y="416" text-anchor="middle" font-size="15" font-weight="bold" fill="#c02020">S</text>
<path d="M1394 426l3 3h-2v3h3v-2l3 3-3 3v-2h-3v3h2l-3 3-3-3h2v-3h-3v2l-3-3 3-3v2h3v-3h-2z" fill="#1050c0"/>
<path d="M1388 463l1-4 9-9 3 3-9 9z" fill="#f0b040" stroke="#b07030"/><path d="M1398 450l3 3 1-2-2-2z" fill="#e06060"/>
<text x="1394" y="492" text-anchor="middle" font-size="10" fill="#1050b0">FS</text>
<path d="M1390 510a4 4 0 0 1 8-1M1398 511a4 4 0 0 1-8 1" fill="none" stroke="#40b040" stroke-width="2"/>
<text class="si" x="1394" y="538">1</text><text class="si" x="1394" y="561">5</text><text class="si" x="1394" y="584">15</text><text class="si" x="1394" y="607">30</text><text class="si" x="1394" y="630">60</text>
<rect x="1385.500" y="637.500" width="20" height="23" fill="#f8f8f8" stroke="#b0b0b0" class="b"/>
<text class="sc" x="1395" y="654">日</text><text class="sc" x="1395" y="677">周</text><text class="sc" x="1395" y="700">月</text><text class="si" x="1395" y="722">N</text><text class="sc" x="1395" y="745">多</text><text class="sc" x="1395" y="768">季</text><text class="sc" x="1395" y="791">年</text>
<rect x="1397" y="918" width="7" height="50" rx="3" fill="#a8a8a8"/>
<rect x="1397" y="937" width="7" height="31" fill="#30c870"/>
</svg>
</body></html>
